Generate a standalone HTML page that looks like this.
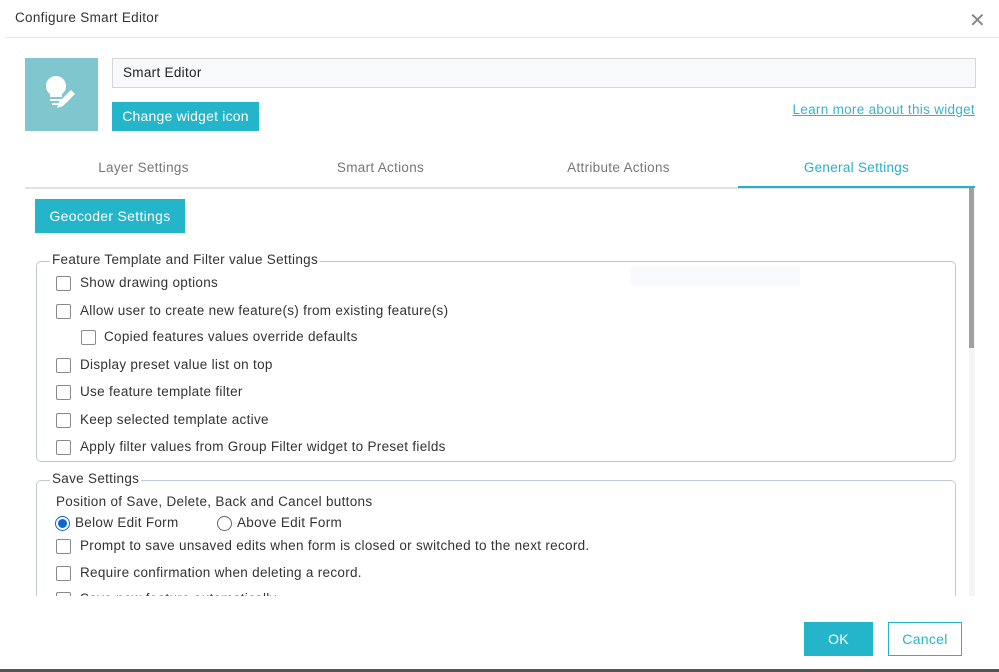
<!DOCTYPE html>
<html><head><meta charset="utf-8"><style>
*{box-sizing:border-box;margin:0;padding:0}
body{width:999px;height:672px;background:#fff;font-family:"Liberation Sans",sans-serif;color:#333;position:relative;overflow:hidden;letter-spacing:0.3px}
.a{position:absolute}
.t{font-size:13.5px;white-space:nowrap}
.cb{position:absolute;width:15px;height:15px;border:1px solid #8a8a8a;border-radius:2px;background:#fff}
.fs{position:absolute;border:1px solid #c5c9d3;border-radius:5px}
.lg{position:absolute;background:#fff;padding:0 2px;font-size:13.5px;color:#333}
.tab{position:absolute;top:160px;font-size:13.5px;color:#777;text-align:center;width:237px}
</style></head><body>
<div class="a t" style="left:15px;top:10px;font-size:13.5px;color:#333">Configure Smart Editor</div>
<div class="a" style="left:969px;top:8px;font-size:20px;color:#888">✕</div>
<div class="a" style="left:5px;top:37px;width:994px;height:1px;background:#e8ecf0"></div>

<div class="a" style="left:25px;top:58px;width:73px;height:73px;background:#80c6cf">
<svg width="73" height="73" viewBox="0 0 73 73"><path d="M31 18a10 10 0 0 0-6 18v3h12v-3a10 10 0 0 0-6-18z" fill="#fff"/><rect x="25" y="41" width="12" height="2" fill="#fff"/><rect x="27" y="45" width="8" height="2" fill="#fff"/><path d="M46 32l4 4-12 12-6 2 2-6z" fill="#fff"/></svg>
</div>
<div class="a" style="left:112px;top:58px;width:864px;height:30px;background:#f8f9fb;border:1px solid #d3d6dc"></div>
<div class="a t" style="left:123px;top:65px;font-size:13.5px;color:#222">Smart Editor</div>
<div class="a t" style="left:112px;top:102px;width:147px;height:29px;background:#24b5cb;color:#fff;line-height:29px;text-align:center;font-size:14px;letter-spacing:0.2px">Change widget icon</div>
<div class="a t" style="right:24px;top:102px;color:#3ab2cf;text-decoration:underline">Learn more about this widget</div>

<div class="tab" style="left:25px">Layer Settings</div>
<div class="tab" style="left:262px">Smart Actions</div>
<div class="tab" style="left:500px">Attribute Actions</div>
<div class="tab" style="left:738px;color:#2aaec9">General Settings</div>
<div class="a" style="left:25px;top:187px;width:950px;height:2px;background:#e1e1e1"></div>
<div class="a" style="left:738px;top:186px;width:237px;height:2px;background:#2aaec9"></div>
<div class="a" style="left:969px;top:188px;width:6px;height:408px;background:#f4f4f4"></div>
<div class="a" style="left:969px;top:188px;width:5px;height:160px;background:#a0a0a0"></div>

<div class="a t" style="left:35px;top:199px;width:150px;height:34px;background:#24b5cb;color:#fff;line-height:34px;text-align:center;font-size:14px">Geocoder Settings</div>

<div style="position:absolute;left:0;top:188px;width:968px;height:408px;overflow:hidden">
<div class="fs" style="left:36px;top:73px;width:920px;height:201px"></div>
<div class="lg" style="left:50px;top:64px">Feature Template and Filter value Settings</div>
<div class="a" style="left:630px;top:78px;width:170px;height:20px;background:#f8fafd"></div>
<div class="fs" style="left:36px;top:292px;width:920px;height:200px"></div>
<div class="lg" style="left:50px;top:283px">Save Settings</div>
</div>

<div class="cb" style="left:56px;top:276px"></div><div class="a t" style="left:80px;top:275px">Show drawing options</div>
<div class="cb" style="left:56px;top:304px"></div><div class="a t" style="left:80px;top:303px">Allow user to create new feature(s) from existing feature(s)</div>
<div class="cb" style="left:81px;top:330px"></div><div class="a t" style="left:104px;top:329px">Copied features values override defaults</div>
<div class="cb" style="left:56px;top:358px"></div><div class="a t" style="left:80px;top:357px">Display preset value list on top</div>
<div class="cb" style="left:56px;top:385px"></div><div class="a t" style="left:80px;top:384px">Use feature template filter</div>
<div class="cb" style="left:56px;top:413px"></div><div class="a t" style="left:80px;top:412px">Keep selected template active</div>
<div class="cb" style="left:56px;top:440px"></div><div class="a t" style="left:80px;top:439px">Apply filter values from Group Filter widget to Preset fields</div>

<div class="a t" style="left:56px;top:494px">Position of Save, Delete, Back and Cancel buttons</div>
<div class="a" style="left:55px;top:516px;width:15px;height:15px;border-radius:50%;border:1px solid #0a66d8"><div style="margin:2px;width:9px;height:9px;border-radius:50%;background:#0a66d8"></div></div>
<div class="a t" style="left:75px;top:515px">Below Edit Form</div>
<div class="a" style="left:217px;top:516px;width:15px;height:15px;border-radius:50%;border:1px solid #666"></div>
<div class="a t" style="left:237px;top:515px">Above Edit Form</div>
<div class="cb" style="left:56px;top:539px"></div><div class="a t" style="left:80px;top:538px">Prompt to save unsaved edits when form is closed or switched to the next record.</div>
<div class="cb" style="left:56px;top:566px"></div><div class="a t" style="left:80px;top:565px">Require confirmation when deleting a record.</div>
<div style="position:absolute;left:0;top:590px;width:968px;height:6px;overflow:hidden"><div class="cb" style="left:56px;top:2px"></div><div class="a t" style="left:80px;top:1px">Save new feature automatically</div></div>

<div class="a t" style="left:804px;top:622px;width:69px;height:34px;background:#24b5cb;color:#fff;line-height:34px;text-align:center;font-size:14px">OK</div>
<div class="a t" style="left:888px;top:622px;width:74px;height:34px;border:1px solid #24b5cb;color:#24b5cb;line-height:32px;text-align:center;font-size:14px">Cancel</div>
<div class="a" style="left:0;top:669px;width:999px;height:3px;background:#555"></div>
</body></html>
